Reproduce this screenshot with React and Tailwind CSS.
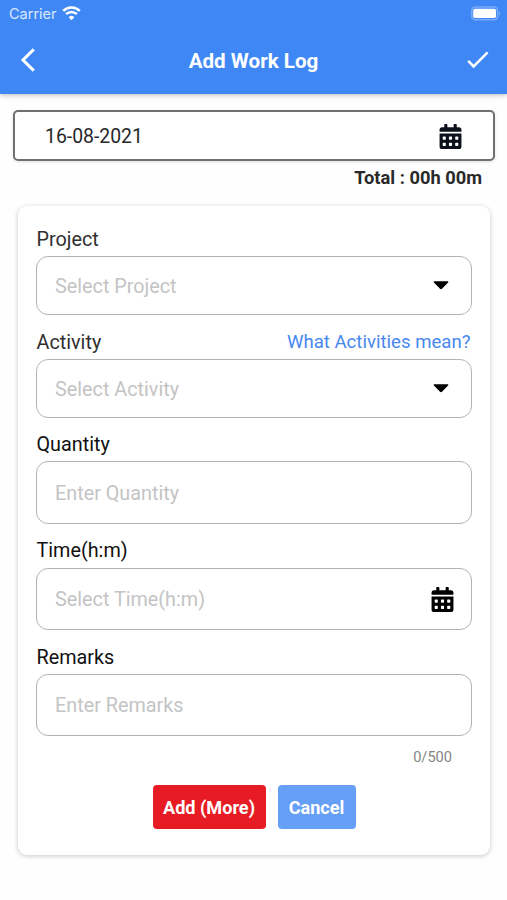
import { FaCalendarAlt } from 'react-icons/fa';

function StatusBar() {
  return (
    <div className="flex h-[27px] items-center justify-between pl-[9px] pr-[5px]">
      <div className="flex items-center gap-[5px] leading-none text-white/80">
        <span className="font-['Inter',sans-serif] pt-px text-[14.5px]">Carrier</span>
        <svg width="19" height="15" viewBox="0 0 19 15" fill="none" className="-mt-px">
          <path d="M1.2 4.9a11.8 11.8 0 0 1 16.6 0" stroke="white" strokeWidth="2.6" />
          <path d="M4.1 8.2a7.6 7.6 0 0 1 10.8 0" stroke="white" strokeWidth="2.4" />
          <path d="M9.5 14.2 6.7 11.2a4 4 0 0 1 5.6 0z" fill="white" />
        </svg>
      </div>
      <svg width="31" height="15" viewBox="0 0 31 15" fill="none">
        <rect x="0.8" y="1" width="25.8" height="12.8" rx="3.6" stroke="white" strokeOpacity=".3" strokeWidth="1.6" />
        <rect x="2.2" y="2.8" width="22.8" height="9.2" rx="1.8" fill="white" />
        <path d="M28.2 5.2v4.4c1.4-.7 1.4-3.7 0-4.4z" fill="white" fillOpacity=".4" />
      </svg>
    </div>
  );
}

function Header() {
  return (
    <header className="h-[94px] bg-[#3f87f5] text-white shadow-[0_1px_5px_rgba(0,0,0,0.28)]">
      <StatusBar />
      <div className="flex h-[67px] items-center justify-between pl-5 pr-[17px]">
        <svg width="21" height="26" viewBox="0 0 21 26" fill="none" className="mb-px">
          <path d="M13.8 2.4 3 13l10.8 10.6" stroke="white" strokeWidth="3" />
        </svg>
        <h1 className="pt-[2px] text-[20.6px] font-bold leading-none">Add Work Log</h1>
        <svg width="24" height="20" viewBox="0 0 24 20" fill="none" className="mb-px">
          <path d="m2.2 10.8 5.4 5.6L21.6 2.4" stroke="white" strokeWidth="2.5" />
        </svg>
      </div>
    </header>
  );
}

function Caret() {
  return (
    <svg width="16" height="9" viewBox="0 0 16 9" className="mr-[22px]">
      <path d="M1.4.3h13.2c.8 0 1 .8.5 1.3L9 7.8c-.6.6-1.4.6-2 0L.9 1.6C.4 1.1.6.3 1.4.3z" fill="black" />
    </svg>
  );
}

function Field({ label, labelClass, placeholder, boxClass, link, children }) {
  return (
    <section>
      <div className={`flex h-6 items-center justify-between pl-[0.5px] text-[19.8px] leading-[24px] ${labelClass}`}>
        <span className="pt-[2px]">{label}</span>
        {link}
      </div>
      <div className={`flex items-center justify-between rounded-[12px] border-[1.5px] border-[#b4b4b4] pl-[18px] text-[19.8px] text-[#c4c4c4] ${boxClass}`}>
        <span className="pt-[2px]">{placeholder}</span>
        {children}
      </div>
    </section>
  );
}

export default function App() {
  return (
    <div className="h-[900px] w-[507px] overflow-hidden bg-[#fefefe] font-['Roboto',sans-serif]">
      <Header />
      <main className="pt-4">
        <div className="mx-[13px] flex h-[51px] w-[482px] items-center justify-between rounded-[5px] border-2 border-[#6f7073] bg-white pl-[30px] pr-[30px] text-[19.4px] text-[#26282c] shadow-[0_1px_3px_rgba(0,0,0,0.12)]">
          <span className="pt-[3px]">16-08-2021</span>
          <FaCalendarAlt size={25} color="#0b101b" className="mt-px" />
        </div>
        <div className="mt-[5px] pr-[25px] text-right text-[18.3px] font-bold leading-[24px] text-[#292929]">Total : 00h 00m</div>

        <div className="ml-[18px] mt-4 h-[649px] w-[472px] rounded-[9px] bg-white px-[18px] pt-[21px] shadow-[0_1px_5px_rgba(0,0,0,0.22)]">
          <div className="flex flex-col">
            <Field label="Project" labelClass="mb-[5px] text-[#303030]" placeholder="Select Project" boxClass="h-[59px]">
              <Caret />
            </Field>
            <Field
              label="Activity"
              labelClass="mt-[15px] mb-[5px] text-[#303030]"
              placeholder="Select Activity"
              boxClass="h-[59px]"
              link={<a className="pr-[1.5px] text-[18.6px] text-[#4788ef]">What Activities mean?</a>}
            >
              <Caret />
            </Field>
            <Field label="Quantity" labelClass="mt-[14px] mb-[5px] text-[#111]" placeholder="Enter Quantity" boxClass="h-[63px]" />
            <Field label="Time(h:m)" labelClass="mt-[14px] mb-[6px] text-[#111]" placeholder="Select Time(h:m)" boxClass="h-[62px]">
              <FaCalendarAlt size={25} color="black" className="mr-[16.5px]" />
            </Field>
            <Field label="Remarks" labelClass="mt-[15px] mb-[5px] text-[#111]" placeholder="Enter Remarks" boxClass="h-[62px]" />
          </div>
          <div className="mt-[11px] pr-[20px] text-right text-[14.6px] leading-5 text-[#858585]">0/500</div>
          <div className="mt-[18px] flex justify-center gap-3 text-[18.1px] font-bold text-white">
            <button className="h-[44px] w-[113px] whitespace-nowrap rounded-[4px] bg-[#e71b24] pt-[2px]">Add (More)</button>
            <button className="h-[44px] w-[78px] rounded-[4px] bg-[#659ff6] pt-[2px]">Cancel</button>
          </div>
        </div>
      </main>
    </div>
  );
}
